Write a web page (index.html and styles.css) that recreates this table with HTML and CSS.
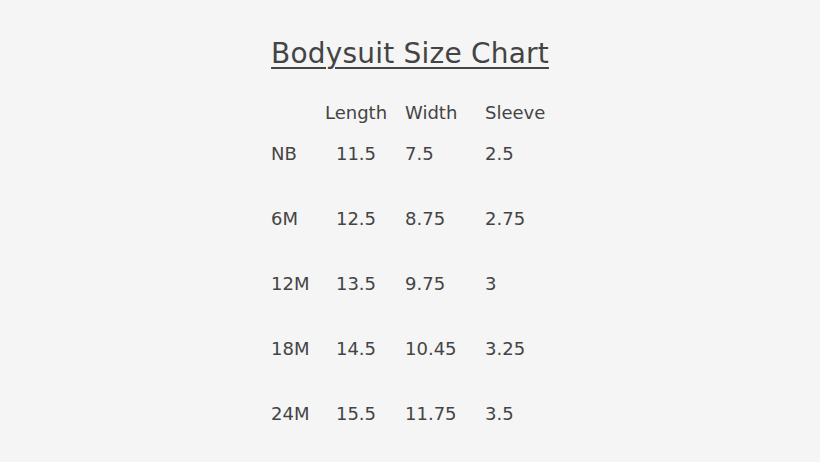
FILE: index.html
```html
<!DOCTYPE html>
<html>
<head>
<meta charset="utf-8">
<link rel="stylesheet" href="styles.css">
</head>
<body>
<div class="chart">
  <h1 class="title">Bodysuit Size Chart</h1>
  <div class="table">
    <div class="row head">
      <span class="c0"></span><span class="c1">Length</span><span class="c2">Width</span><span class="c3">Sleeve</span>
    </div>
    <div class="row"><span class="c0">NB</span><span class="c1">11.5</span><span class="c2">7.5</span><span class="c3">2.5</span></div>
    <div class="row"><span class="c0">6M</span><span class="c1">12.5</span><span class="c2">8.75</span><span class="c3">2.75</span></div>
    <div class="row"><span class="c0">12M</span><span class="c1">13.5</span><span class="c2">9.75</span><span class="c3">3</span></div>
    <div class="row"><span class="c0">18M</span><span class="c1">14.5</span><span class="c2">10.45</span><span class="c3">3.25</span></div>
    <div class="row"><span class="c0">24M</span><span class="c1">15.5</span><span class="c2">11.75</span><span class="c3">3.5</span></div>
  </div>
</div>
</body>
</html>
```
FILE: styles.css
```css
html, body {
  margin: 0;
  padding: 0;
  background: #f5f5f5;
}
body {
  font-family: "DejaVu Sans", "Liberation Sans", sans-serif;
  color: #444444;
  width: 820px;
  height: 462px;
  overflow: hidden;
}
.chart {
  display: flex;
  flex-direction: column;
  align-items: center;
  padding-top: 38px;
}
.title {
  margin: 0;
  font-size: 28px;
  line-height: 32px;
  font-weight: normal;
  letter-spacing: 0.2px;
  text-decoration: underline;
  text-decoration-thickness: 2px;
  text-underline-offset: 4px;
  width: 278px;
  text-align: center;
  white-space: nowrap;
}
.table {
  width: 278px;
  margin-top: 31px;
  display: flex;
  flex-direction: column;
  font-size: 18px;
  line-height: 24px;
}
.row {
  display: grid;
  grid-template-columns: 54px 80px 80px auto;
  margin-bottom: 41px;
  white-space: nowrap;
}
.row.head {
  margin-bottom: 17px;
}
.c1 {
  width: 62px;
  text-align: center;
}
```
